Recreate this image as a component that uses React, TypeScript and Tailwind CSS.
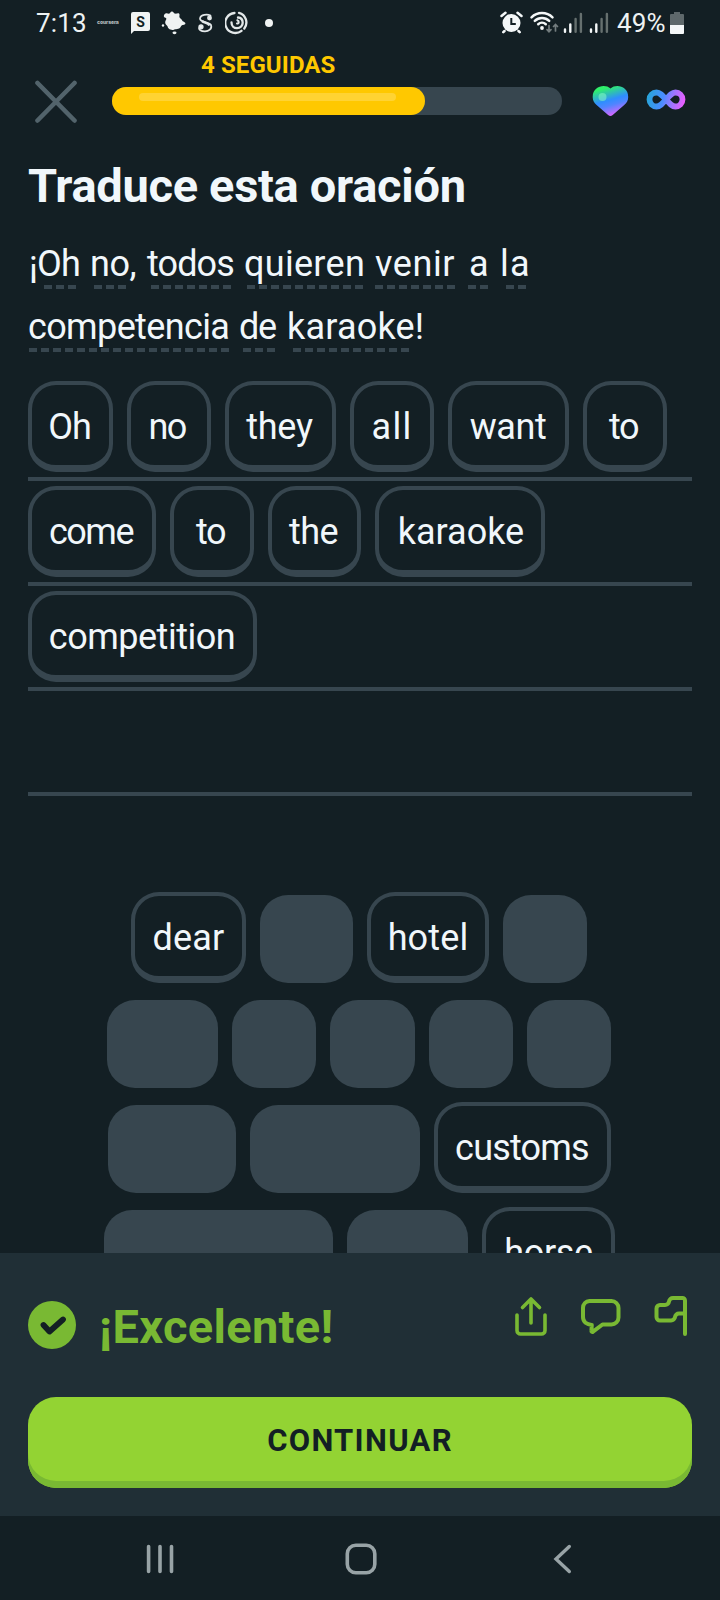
type Word = { text: string; cell: string; underline: string };
type Tile = { text?: string; width: string; tracking?: string };

const sentence: Word[][] = [
  [
    { text: "¡Oh", cell: "ml-[1px] w-[61px] tracking-[-0.8px]", underline: "ml-[15px] w-[32px]" },
    { text: "no,", cell: "w-[57px] tracking-[-0.4px]", underline: "ml-[4px] w-[32px]" },
    { text: "todos", cell: "w-[97px] tracking-[-0.9px]", underline: "ml-[4px] w-[80px]" },
    { text: "quieren", cell: "w-[131px] tracking-[0.3px]", underline: "ml-[3px] w-[116px]" },
    { text: "venir", cell: "w-[94px] tracking-[0.6px]", underline: "w-[80px]" },
    { text: "a", cell: "w-[31px]", underline: "-ml-[1px] w-[20px]" },
    { text: "la", cell: "w-[40px] tracking-[1.3px]", underline: "ml-[6px] w-[20px]" },
  ],
  [
    { text: "competencia", cell: "w-[211px] tracking-[-0.63px]", underline: "ml-[1px] w-[200px]" },
    { text: "de", cell: "w-[48px] tracking-[-1.2px]", underline: "ml-[4px] w-[32px]" },
    { text: "karaoke!", cell: "w-[150px] tracking-[0.2px]", underline: "ml-[6px] w-[116px]" },
  ],
];

const answer: Tile[][] = [
  [
    { text: "Oh", width: "w-[85px]", tracking: "tracking-[-1px] pr-[2px]" },
    { text: "no", width: "w-[84px]", tracking: "tracking-[-1.7px] pr-[4px]" },
    { text: "they", width: "w-[111px]", tracking: "tracking-[-0.3px] pr-[2px]" },
    { text: "all", width: "w-[84px]", tracking: "tracking-[1.3px]" },
    { text: "want", width: "w-[121px]", tracking: "tracking-[-0.4px] pr-[1px]" },
    { text: "to", width: "w-[84px]", tracking: "tracking-[-1.6px] pr-[3px]" },
  ],
  [
    { text: "come", width: "w-[128px]", tracking: "tracking-[-1.5px] pr-[2px]" },
    { text: "to", width: "w-[84px]", tracking: "tracking-[-1.6px] pr-[3px]" },
    { text: "the", width: "w-[93px]", tracking: "tracking-[-0.6px] pr-[2px]" },
    { text: "karaoke", width: "w-[170px]", tracking: "pl-[2px]" },
  ],
  [{ text: "competition", width: "w-[229px]", tracking: "tracking-[-0.48px] pr-[1px]" }],
  [],
];

const bank: { indent: string; tiles: Tile[] }[] = [
  {
    indent: "pl-[131px]",
    tiles: [
      { text: "dear", width: "w-[115px]", tracking: "tracking-[0.2px]" },
      { width: "w-[93px]" },
      { text: "hotel", width: "w-[122px]", tracking: "tracking-[0.15px]" },
      { width: "w-[84px]" },
    ],
  },
  {
    indent: "pl-[107px]",
    tiles: [
      { width: "w-[111px]" },
      { width: "w-[84px]" },
      { width: "w-[85px]" },
      { width: "w-[84px]" },
      { width: "w-[84px]" },
    ],
  },
  {
    indent: "pl-[108px]",
    tiles: [
      { width: "w-[128px]" },
      { width: "w-[170px]" },
      { text: "customs", width: "w-[177px]", tracking: "tracking-[-0.8px] pr-[1px]" },
    ],
  },
  {
    indent: "pl-[104px]",
    tiles: [
      { width: "w-[229px]" },
      { width: "w-[121px]" },
      { text: "horse", width: "w-[133px]", tracking: "tracking-[-0.3px]" },
    ],
  },
];

function WordTile({ text, width, tracking = "" }: Tile) {
  if (!text) {
    return <div className={`mt-[3px] h-[88px] shrink-0 rounded-[28px] bg-[#37464f] ${width}`} />;
  }
  return (
    <button
      className={`h-[91px] shrink-0 rounded-[28px] border-4 border-b-[7px] border-[#37464f] pt-[4px] text-center text-[36px] leading-[76px] whitespace-nowrap text-[#f1f7fb] ${width} ${tracking}`}
    >
      {text}
    </button>
  );
}

function Signal() {
  return (
    <svg viewBox="0 0 20 24" className="h-[24px] w-[20px]" strokeWidth="2.4" strokeLinecap="round">
      <path d="M2 18.500V20.800M7.300 13.500V20.800" stroke="#f4f7f8" />
      <path d="M12.600 8V20.800M17.900 3V20.800" stroke="#66706f" />
    </svg>
  );
}

function StatusBar() {
  return (
    <header className="flex h-[45px] shrink-0 items-center text-[26px] leading-[45px] text-[#eef2f3]">
      <span className="ml-[36px] w-[61px] pt-px tracking-[0.15px]">7:13</span>
      <span className="w-[34px] font-['Inter',sans-serif] text-[5px] font-black tracking-[-0.1px] text-[#aab2b4]">
        coursera
      </span>
      <span className="relative flex h-[22px] w-[30px]">
        <svg viewBox="131 12 20 22" className="h-[22px] w-[20px]">
          <path d="M133 12h15a2 2 0 0 1 2 2v15a2 2 0 0 1-2 2h-14l-3 3V14a2 2 0 0 1 2-2z" fill="#f0f3f3" />
        </svg>
        <b className="absolute top-0 left-0 w-[19px] text-center text-[14px] leading-[20px] text-[#131f24]">S</b>
      </span>
      <svg viewBox="160 11 25 24" className="h-[24px] w-[25px]" fill="#f0f3f3">
        <path d="M164.500 13.500c1.500-1 2.800.6 4 0c1-.8 1.200-2.400 2.800-2c1.400.4 1.200 1.700 2.600 2.100c1.500.4 3.300-.9 4.300.2c.9 1-.3 2.300.4 3.600c.6 1.200 2 1.400 2.500 2.800c.3 1.600 3.400 1.600 3.300 3.300c-.1 1.700-2.800 1-3.800 2c-1.200 1.300-1.200 2.800-3.300 3.300c-1.800.5-2.800.3-4.400.9c-1.500.4-3.700.2-5.200-1.200c-1.300-1-.6-1.900-1.800-2.900c-1-.9-1.900-2.100-1.700-3.600c.2-1.400 1-1.800 1.100-3.200c.1-1.300-1.600-.6-2.300-2c-.6-1.100.4-2.800 1.500-3.300z" />
        <circle cx="162" cy="25.500" r="1.200" />
        <ellipse cx="173.500" cy="32.800" rx="2" ry="1.400" />
      </svg>
      <svg viewBox="196 13 17 20" className="ml-[11px] h-[20px] w-[17px]" fill="none" stroke="#e3e8e9" strokeWidth="1.700">
        <path d="M209.500 15.500c-3-1.500-10-1.300-10.500 3c-.3 4 9.500 3.500 11 6.500c1.500 4-2.500 6.300-6 6.300c-3 0-6-1-6-3.300" strokeLinecap="round" />
        <circle cx="208.500" cy="18" r="1.600" fill="#f0f3f3" />
        <circle cx="200" cy="26.800" r="1.800" fill="#f0f3f3" />
        <path d="M201 21c2.500 2 6 1.500 7.500 4.500" strokeWidth="2.400" />
      </svg>
      <svg viewBox="224 11 24 24" className="ml-[11px] h-[24px] w-[24px]" fill="none" stroke="#e3e8e9" strokeWidth="2.300" strokeLinecap="round">
        <path d="M233.500 13a10 10 0 1 0 7 17.800M243.300 28.500a10 10 0 0 0-5.300-15.700" />
        <path d="M230.500 22.500c0 3.500 2.500 5.700 5.500 5.700c3.500 0 5.700-2.700 5.700-5.500c0-3-2-5-4.700-5.200" />
        <path d="M236 23.500c2 .3 2.500-2.500.3-3.300" strokeWidth="2" />
      </svg>
      <span className="ml-[16px] size-2 rounded-full bg-[#f0f3f3]" />

      <svg viewBox="498 11 25 24" className="ml-[226px] h-[24px] w-[25px]" stroke="#f4f7f8" strokeLinecap="round" fill="none">
        <circle cx="510.500" cy="23" r="9" fill="#f4f7f8" stroke="none" />
        <path d="M500.500 16l4-3.300M520.500 16l-4-3.300M503.500 31l-1.200 1.200M517.500 31l1.200 1.200" strokeWidth="2.500" />
        <path d="M510.300 18v6h4.500" stroke="#131f24" strokeWidth="2" strokeLinecap="butt" />
      </svg>
      <svg viewBox="529 11 30 24" className="ml-[5px] h-[24px] w-[30px]" fill="none" strokeLinecap="round">
        <path d="M531.500 17.300a15 15 0 0 1 21 0M534.800 20.800a10.500 10.500 0 0 1 14.400 0M538.200 24.200a5.800 5.800 0 0 1 7.600 0" stroke="#f4f7f8" strokeWidth="2.500" />
        <circle cx="542" cy="28" r="1.900" fill="#f4f7f8" />
        <path d="M549 25.500v6M547 29.700l2 2l2-2M555.500 31v-6.500M553.500 26.500l2-2l2 2" stroke="#737c7e" strokeWidth="1.700" />
      </svg>
      <span className="ml-[4px] flex"><Signal /></span>
      <span className="ml-[6px] flex"><Signal /></span>
      <span className="ml-[8px] w-[53px] pt-px tracking-[0.2px]">49%</span>
      <svg viewBox="670 12 14 22" className="h-[22px] w-[14px]">
        <path d="M674 12h6v2h3a1 1 0 0 1 1 1v10h-14V15a1 1 0 0 1 1-1h3z" fill="#5e686b" />
        <path d="M670 25h14v8a1 1 0 0 1-1 1h-12a1 1 0 0 1-1-1z" fill="#f4f7f8" />
      </svg>
    </header>
  );
}

function LessonHeader() {
  return (
    <div className="flex h-[88px] shrink-0">
      <svg viewBox="34 80 44 44" className="mt-[35px] ml-[34px] size-[44px]" stroke="#52636b" strokeWidth="4.600" strokeLinecap="round">
        <path d="M37.500 83L74.500 120.500M74.500 83L37.500 120.500" />
      </svg>
      <div className="ml-[34px] w-[450px]">
        <p className="h-[42px] pl-[89px] text-[24px] leading-[41px] font-bold tracking-[0.1px] whitespace-nowrap text-[#ffc800]">
          4 SEGUIDAS
        </p>
        <div className="h-7 rounded-full bg-[#37464f]">
          <div className="h-7 w-[313px] rounded-full bg-[#ffc800] px-[27px] pt-1.5">
            <div className="h-2 w-[257px] rounded-full bg-[#ffd333]" />
          </div>
        </div>
      </div>
      <svg viewBox="592 85 37 32" className="mt-[40px] ml-[30px] h-[32px] w-[37px]">
        <defs>
          <linearGradient id="heart" x1="0.15" y1="0" x2="0.5" y2="1">
            <stop offset="0.12" stopColor="#2ff06a" />
            <stop offset="0.52" stopColor="#2f8dff" />
            <stop offset="0.68" stopColor="#4f85ff" />
            <stop offset="1" stopColor="#d866ff" />
          </linearGradient>
        </defs>
        <path
          d="M610.500 88.500C605 83.500 592.700 86 592.700 97c0 3.800 1.500 5.600 3.600 7.700l11.800 10.300c1.500 1.300 3.100 1.300 4.600 0l11.800-10.300c2.200-2.100 3.700-3.900 3.700-7.700C628.200 86 616 83.500 610.500 88.500z"
          fill="url(#heart)"
        />
        <circle cx="602.500" cy="97" r="4" fill="#8dffc8" fillOpacity="0.5" />
      </svg>
      <svg viewBox="646 88 40 24" className="mt-[43px] ml-[17px] h-[24px] w-[40px]">
        <defs>
          <linearGradient id="infinity" x1="647" x2="685" y1="95" y2="104" gradientUnits="userSpaceOnUse">
            <stop offset="0" stopColor="#26a5d8" />
            <stop offset="0.42" stopColor="#4a8cff" />
            <stop offset="0.6" stopColor="#8b7bff" />
            <stop offset="1" stopColor="#f15cff" />
          </linearGradient>
        </defs>
        <path
          d="M666 99.500c-3.500-4-6-7-9.500-7a7 7 0 0 0 0 14c3.500 0 6-3 9.500-7s6-7 9.500-7a7 7 0 0 1 0 14c-3.500 0-6-3-9.500-7z"
          fill="none"
          stroke="url(#infinity)"
          strokeWidth="5.800"
        />
      </svg>
    </div>
  );
}

function Feedback() {
  return (
    <footer className="h-[263px] shrink-0 bg-[#202f36] px-7">
      <div className="flex h-[144px] text-[#79b933]">
        <svg viewBox="28 1301 48 48" className="mt-[48px] size-12">
          <circle cx="52" cy="1325" r="24" fill="#79b933" />
          <path d="M43.500 1325l6 6.500L63 1319.500" fill="none" stroke="#131f24" strokeWidth="5.800" strokeLinecap="round" strokeLinejoin="round" />
        </svg>
        <h2 className="ml-[23px] w-[414px] pt-[44px] text-[47px] leading-[60px] font-bold tracking-[0.3px]">¡Excelente!</h2>
        <svg viewBox="513 1294 36 44" className="mt-[41px] h-[44px] w-[36px]" fill="none" stroke="currentColor" strokeWidth="3.600" strokeLinecap="round" strokeLinejoin="round">
          <path d="M517 1315v15.500a3.500 3.500 0 0 0 3.500 3.500h21a3.500 3.500 0 0 0 3.500-3.500V1315M531 1323v-23.500M522.500 1307.500l8.500-8.500l8.500 8.500" />
        </svg>
        <svg viewBox="579 1296 44 40" className="mt-[43px] ml-[30px] h-[40px] w-[44px]" fill="none" stroke="currentColor" strokeWidth="4" strokeLinejoin="round">
          <path d="M589.500 1301h22a7 7 0 0 1 7 7v9.500a7 7 0 0 1-7 7h-9l-9.500 7.200c-.8.500-1.700 0-1.600-1l.4-5.800c-5-.4-8.800-3-8.800-7.900v-9a7 7 0 0 1 6.500-7z" />
        </svg>
        <svg viewBox="652 1294 38 44" className="mt-[41px] ml-[29px] h-[44px] w-[38px] shrink-0" fill="none" stroke="currentColor" strokeWidth="4" strokeLinecap="round" strokeLinejoin="round">
          <path d="M685 1334v-33.500a2.500 2.500 0 0 0-2.500-2.500H673a4 4 0 0 0-4 3.500a4 4 0 0 1-4 3.500h-5a3.500 3.500 0 0 0-3.500 3.500v8.500a3.500 3.500 0 0 0 3.500 3.500h11a4 4 0 0 0 4-3.500a4 4 0 0 1 4-3.500h6" />
        </svg>
      </div>
      <button className="h-[91px] w-full rounded-[28px] bg-[#93d333] pb-[4px] text-[31px] leading-[84px] font-bold tracking-[1.3px] text-[#131f24] shadow-[inset_0_-7px_0_#79b933]">
        CONTINUAR
      </button>
    </footer>
  );
}

function NavigationBar() {
  return (
    <nav className="flex h-[84px] shrink-0 items-center pt-[2px] pl-[144px]">
      <svg viewBox="144 1543 32 32" className="size-8" fill="none" stroke="#98a3a6" strokeWidth="3.600" strokeLinecap="round">
        <path d="M148.600 1546.500v25M160 1546.500v25M171.500 1546.500v25" />
      </svg>
      <svg viewBox="344 1542 34 34" className="ml-[168px] size-[34px]" fill="none" stroke="#98a3a6" strokeWidth="3.600">
        <rect x="347.300" y="1545.300" width="27.500" height="27.500" rx="8.500" />
      </svg>
      <svg viewBox="552 1543 22 32" className="ml-[174px] h-8 w-[22px]" fill="none" stroke="#98a3a6" strokeWidth="3.400" strokeLinecap="round">
        <path d="M569.300 1546.500L556 1559l13.300 12.500" />
      </svg>
    </nav>
  );
}

export default function App() {
  return (
    <div className="flex h-[1600px] w-[720px] flex-col overflow-hidden bg-[#131f24] font-['Roboto',sans-serif]">
      <StatusBar />
      <LessonHeader />
      <main className="h-[1120px] shrink-0 overflow-hidden">
        <h1 className="h-[110px] pt-[23px] pl-[28px] text-[47px] leading-[60px] font-bold tracking-[-0.3px] whitespace-nowrap text-[#f1f7fb]">
          Traduce esta oración
        </h1>
        {sentence.map((line, i) => (
          <p key={i} className="flex h-[63px] pl-[28px] text-[36px] text-[#f1f7fb]">
            {line.map((word) => (
              <span key={word.text} className={`flex shrink-0 flex-col whitespace-nowrap ${word.cell}`}>
                <span className="h-[42px] leading-[42px]">{word.text}</span>
                <span
                  className={`h-1 bg-[repeating-linear-gradient(90deg,#37464f_0_8px,transparent_8px_12px)] ${word.underline}`}
                />
              </span>
            ))}
          </p>
        ))}
        <section className="mt-[7px] px-7">
          {answer.map((row, i) => (
            <div key={i} className="flex h-[105px] gap-[14px] border-b-4 border-[#37464f] pt-[5px]">
              {row.map((tile, j) => (
                <WordTile key={j} {...tile} />
              ))}
            </div>
          ))}
        </section>
        <section className="mt-[96px]">
          {bank.map((row, i) => (
            <div key={i} className={`flex h-[105px] gap-[14px] ${row.indent}`}>
              {row.tiles.map((tile, j) => (
                <WordTile key={j} {...tile} />
              ))}
            </div>
          ))}
        </section>
      </main>
      <Feedback />
      <NavigationBar />
    </div>
  );
}
